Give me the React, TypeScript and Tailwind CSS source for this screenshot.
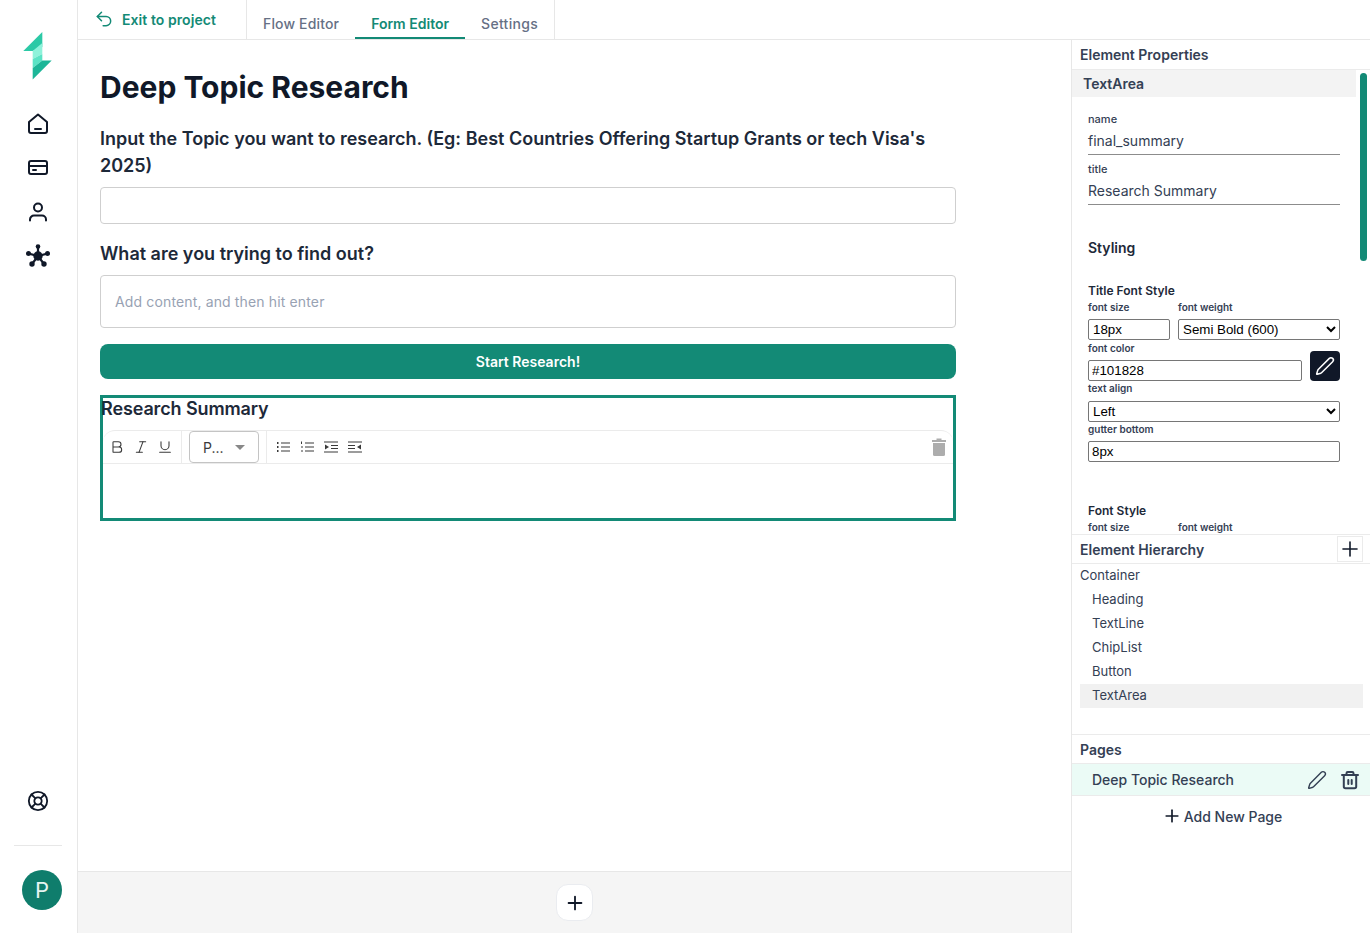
import React from "react";
import { Undo2, Plus, Pen, LifeBuoy, Bold, Italic, Underline } from "lucide-react";

const Logo = () => (
  <svg width="30" height="48" viewBox="0 0 30 48" className="block">
    <polygon points="19.3,0 0.3,19 9.7,19 19.3,15" fill="#2cc9a6" />
    <polygon points="9.7,19 19.3,11 19.3,19 19.3,22 9.7,27" fill="#8ef2da" />
    <polygon points="9.7,27 19.3,22 19.3,28.5 9.7,36" fill="#5be3c5" />
    <polygon points="9.7,36 19.3,28.5 28.7,28.5 9.7,47.5" fill="#1cb698" />
  </svg>
);

const HomeIcon = () => (
  <svg width="24" height="24" viewBox="0 0 24 24" fill="none" stroke="#101828" strokeWidth="2" strokeLinejoin="round" strokeLinecap="round">
    <path d="M3 10 12 2.500 21 10v9a2 2 0 0 1-2 2H5a2 2 0 0 1-2-2z" />
    <path d="M9 17h6" />
  </svg>
);
const CardIcon = () => (
  <svg width="24" height="24" viewBox="0 0 24 24" fill="none" stroke="#101828" strokeWidth="2" strokeLinejoin="round" strokeLinecap="round">
    <rect x="3" y="5" width="18" height="13" rx="2" />
    <path d="M3 10h18" />
    <path d="M7 14h3" />
  </svg>
);
const UserIcon = () => (
  <svg width="24" height="24" viewBox="0 0 24 24" fill="none" stroke="#101828" strokeWidth="2" strokeLinecap="round">
    <circle cx="12" cy="7.500" r="4" />
    <path d="M4 20.500v-1a4 4 0 0 1 4-4h8a4 4 0 0 1 4 4v1" />
  </svg>
);
const NetIcon = () => (
  <svg width="24" height="24" viewBox="0 0 24 24" fill="#101828" stroke="#101828" strokeWidth="2.200">
    <path d="M12 3v9M2.500 9.500 12 12l9.500-2.500M6 20l6-8 6 8" fill="none" />
    <circle cx="12" cy="12" r="4.700" stroke="none" />
    <circle cx="12" cy="2.500" r="2.300" stroke="none" />
    <circle cx="2.500" cy="9.500" r="2.500" stroke="none" />
    <circle cx="21.500" cy="9.500" r="2.500" stroke="none" />
    <circle cx="6" cy="20" r="2.700" stroke="none" />
    <circle cx="18" cy="20" r="2.700" stroke="none" />
  </svg>
);
const TrashFill = () => (
  <svg width="14" height="18" viewBox="0 0 14 18" fill="#adadad">
    <rect x="0" y="2" width="14" height="2" />
    <rect x="4.500" y="0.500" width="5" height="2" />
    <path d="M1 5h12v11.500a1.500 1.500 0 0 1-1.500 1.500h-9A1.500 1.500 0 0 1 1 16.500z" />
  </svg>
);
const TrashLine = () => (
  <svg width="20" height="20" viewBox="0 0 20 20" fill="none" stroke="#344054" strokeWidth="2" strokeLinecap="round" strokeLinejoin="round">
    <path d="M2 5h16" />
    <path d="M6.500 5V3.200C6.500 2.500 7 2 7.700 2h4.600c.7 0 1.200.5 1.200 1.200V5" />
    <path d="M3.800 5v11.500c0 1 .7 1.700 1.700 1.700h9c1 0 1.700-.7 1.700-1.700V5" />
    <path d="M8.300 10v4M11.700 10v4" />
  </svg>
);

const ToolIcon = ({ children }: { children: React.ReactNode }) => (
  <svg width="14" height="14" viewBox="0 0 14 14" fill="#3a3a3a" stroke="#3a3a3a" strokeWidth="1.200">
    {children}
  </svg>
);
const BulletList = () => (
  <ToolIcon>
    <path d="M5 3h9M5 7h9M5 11h9" fill="none" />
    <path d="M1 3h1.500M1 7h1.500M1 11h1.500" fill="none" strokeWidth="1.800" />
  </ToolIcon>
);
const NumberList = () => (
  <ToolIcon>
    <path d="M5 3h9M5 7h9M5 11h9" fill="none" />
    <path d="M1.500 1.500v2.500M1 7h2M1 11h2" fill="none" strokeWidth="1" />
  </ToolIcon>
);
const IndentMore = () => (
  <ToolIcon>
    <path d="M0 2h14M7 5.500h7M7 8.500h7M0 12h14" fill="none" />
    <polygon points="1,4.500 5,7 1,9.500" stroke="none" />
  </ToolIcon>
);
const IndentLess = () => (
  <ToolIcon>
    <path d="M0 2h14M0 5.500h7M0 8.500h7M0 12h14" fill="none" />
    <polygon points="13,4.500 9,7 13,9.500" stroke="none" />
  </ToolIcon>
);

const labelCls = "text-[10px] leading-[12px] font-semibold text-[#344054]";
const fieldCls = "h-[21px] border border-[#767676] rounded-[2px] bg-white text-[13.33px] text-black font-['Liberation_Sans',sans-serif] outline-none";

export default function App() {
  return (
    <div className="flex h-[933px] w-[1370px] overflow-hidden bg-white font-['Inter',sans-serif] text-[#101828]">
      {/* Sidebar */}
      <aside className="flex h-full w-[78px] shrink-0 flex-col items-center border-r border-[#e7e7e7] pt-8 pr-[1px] pb-[23px]">
        <div className="-ml-[1px]"><Logo /></div>
        <nav className="mt-[32px] flex flex-col items-center gap-5">
          <HomeIcon />
          <CardIcon />
          <UserIcon />
          <NetIcon />
        </nav>
        <div className="mt-auto flex flex-col items-center">
          <LifeBuoy size={22} color="#101828" strokeWidth={2} />
          <div className="mt-[33px] h-px w-[48px] bg-[#e7e7e7]" />
          <div className="mt-6 ml-[8px] flex h-10 w-10 items-center justify-center rounded-full bg-[#0f7d6c] text-[22px] text-[#e6f5f1]">P</div>
        </div>
      </aside>

      {/* Main column */}
      <div className="flex min-w-0 flex-1 flex-col">
        <header className="flex h-10 shrink-0 border-b border-[#e7e7e7]">
          <div className="flex w-[169px] items-start gap-2 border-r border-[#e7e7e7] pt-[11px] pl-4">
            <Undo2 className="-mt-[2px]" size={20} color="#138a76" strokeWidth={1.800} />
            <span className="text-[14px] leading-[18px] font-semibold tracking-[0.07px] text-[#138a76]">Exit to project</span>
          </div>
          <div className="flex border-r border-[#e7e7e7] pl-[8px]">
            <div className="pt-[15px] pr-[16px] pl-[8px] text-[14px] leading-[18px] font-medium tracking-[0.15px] text-[#667085]">Flow Editor</div>
            <div className="border-b-2 border-[#138a76] px-4 pt-[15px] text-[14px] leading-[18px] font-semibold text-[#138a76]">Form Editor</div>
            <div className="px-4 pt-[15px] text-[14px] leading-[18px] font-medium tracking-[0.3px] text-[#667085]">Settings</div>
          </div>
        </header>

        <div className="flex min-h-0 flex-1">
          <div className="flex min-w-0 flex-1 flex-col">
            <main className="min-h-0 flex-1 pt-[28px] pl-[22px]">
              <div className="w-[856px]">
                <h1 className="text-[30px] leading-[38px] font-bold text-[#101828]">Deep Topic Research</h1>
                <label className="mt-[19px] block text-[18px] leading-[27px] font-semibold text-[#1d2939]">
                  Input the Topic you want to research. (Eg: Best Countries Offering Startup Grants or tech Visa's 2025)
                </label>
                <input className="mt-[8px] block h-[37px] w-full rounded border border-[#cfcfcf] outline-none" />
                <label className="mt-[16px] block text-[18px] leading-[27px] font-semibold text-[#1d2939]">What are you trying to find out?</label>
                <div className="mt-[8px] flex h-[53px] items-center rounded border border-[#cfcfcf] px-[14px] text-[14px] tracking-[0.14px] text-[#98a2b3]">Add content, and then hit enter</div>
                <button className="mt-4 flex h-[35px] w-full items-center justify-center rounded-lg bg-[#138a76] text-[14px] font-semibold text-white">Start Research!</button>
                <section className="mt-4 h-[126px] border-[3px] border-[#138a76]">
                  <div className="-ml-[2px] text-[18px] leading-[22px] font-semibold tracking-[-0.12px] text-[#1d2939]">Research Summary</div>
                  <div className="mt-[10px] flex h-[34px] items-center rounded-t-xl border-y border-[#ebebeb] text-[#3a3a3a]">
                    <div className="flex h-full w-[79px] items-center gap-2 border-r border-[#ebebeb] pl-[6px]">
                      <Bold size={16} strokeWidth={1.600} />
                      <Italic size={16} strokeWidth={1.600} />
                      <Underline size={16} strokeWidth={1.600} />
                    </div>
                    <div className="ml-[7px] flex h-[32px] w-[70px] items-center rounded border border-[#c4c4c4] pl-[13px] text-[14px]">
                      P...
                      <span className="ml-[11px] h-0 w-0 border-x-[5px] border-t-[5px] border-x-transparent border-t-[#888888]" />
                    </div>
                    <div className="ml-[7px] flex h-full flex-1 items-center gap-[10px] border-l border-[#ebebeb] pl-[9px]">
                      <BulletList />
                      <NumberList />
                      <IndentMore />
                      <IndentLess />
                      <div className="mr-[7px] ml-auto"><TrashFill /></div>
                    </div>
                  </div>
                </section>
              </div>
            </main>
            <footer className="flex h-[62px] shrink-0 items-center justify-center border-t border-[#e7e7e7] bg-[#f5f5f5]">
              <div className="flex h-[37px] w-[37px] items-center justify-center rounded-xl border border-[#eaecf0] bg-white">
                <Plus size={22} color="#101828" strokeWidth={2} />
              </div>
            </footer>
          </div>

          {/* Right panel */}
          <aside className="flex h-full w-[299px] shrink-0 flex-col border-l border-[#e7e7e7]">
            <div className="flex h-[30px] shrink-0 items-center border-b border-[#ebebeb] pl-[8px] text-[14px] font-semibold text-[#344054]">Element Properties</div>
            <div className="relative h-[464px] shrink-0 overflow-hidden">
              <div className="absolute top-[3px] right-[3px] h-[188px] w-[7px] rounded-full bg-[#138a76]" />
              <div className="flex h-[27px] w-[284px] items-center bg-[#f3f3f3] pl-[11px] text-[14px] font-semibold text-[#344054]">TextArea</div>
              <div className="ml-[16px] w-[252px]">
                <div className="mt-[16px] text-[11px] leading-[13px] font-medium text-[#344054]">name</div>
                <div className="mt-[3px] h-[26px] border-b border-[#8c8c8c] text-[14px] leading-[24px] text-[#344054]">final_summary</div>
                <div className="mt-[8px] text-[11px] leading-[13px] font-medium text-[#344054]">title</div>
                <div className="mt-[3px] h-[26px] border-b border-[#8c8c8c] text-[14px] leading-[24px] text-[#344054]">Research Summary</div>
                <div className="mt-[33px] text-[14px] leading-[20px] font-semibold text-[#1d2939]">Styling</div>
                <div className="mt-[25px] text-[12px] leading-[16px] font-semibold text-[#1d2939]">Title Font Style</div>
                <div className="mt-[2px] flex gap-2">
                  <div className="w-[82px]">
                    <div className={labelCls}>font size</div>
                    <input defaultValue="18px" className={`mt-[6px] block w-[82px] px-1 ${fieldCls}`} />
                  </div>
                  <div className="flex-1">
                    <div className={labelCls}>font weight</div>
                    <select defaultValue="600" className={`mt-[6px] block w-full ${fieldCls}`}>
                      <option value="600">Semi Bold (600)</option>
                    </select>
                  </div>
                </div>
                <div className="mt-[2px] flex items-end gap-2">
                  <div className="flex-1">
                    <div className={labelCls}>font color</div>
                    <input defaultValue="#101828" className={`mt-[6px] block w-full px-[3px] ${fieldCls}`} />
                  </div>
                  <div className="flex h-[30px] w-[30px] items-center justify-center rounded bg-[#101828]">
                    <Pen size={20} color="#ffffff" strokeWidth={1.800} />
                  </div>
                </div>
                <div className={`mt-[1px] ${labelCls}`}>text align</div>
                <select defaultValue="left" className={`mt-[7px] block w-full ${fieldCls}`}>
                  <option value="left">Left</option>
                </select>
                <div className={`mt-[1px] ${labelCls}`}>gutter bottom</div>
                <input defaultValue="8px" className={`mt-[6px] block w-full px-[3px] ${fieldCls}`} />
                <div className="mt-[41px] text-[12px] leading-[16px] font-semibold text-[#1d2939]">Font Style</div>
                <div className="mt-[2px] flex gap-2">
                  <div className={`w-[82px] ${labelCls}`}>font size</div>
                  <div className={labelCls}>font weight</div>
                </div>
              </div>
            </div>

            <div className="flex h-[30px] shrink-0 items-center justify-between border-y border-[#ebebeb] pl-[8px] text-[14px] font-semibold text-[#344054]">
              Element Hierarchy
              <div className="mr-[7px] flex h-[26px] w-[26px] items-center justify-center border border-[#ebebeb]">
                <Plus size={24} color="#101828" strokeWidth={1.600} />
              </div>
            </div>
            <div className="h-[171px] shrink-0 border-b border-[#ebebeb] text-[13px] text-[#344054]">
              <div className="flex h-6 items-center pl-[8px]">Container</div>
              {["Heading", "TextLine", "ChipList", "Button"].map((t) => (
                <div key={t} className="flex h-6 items-center pl-[20px]">{t}</div>
              ))}
              <div className="mr-[7px] ml-[8px] flex h-6 items-center bg-[#f1f1f1] pl-[12px]">TextArea</div>
            </div>
            <div className="flex h-[29px] shrink-0 items-center border-b border-[#ebebeb] pl-[8px] text-[14px] font-semibold text-[#344054]">Pages</div>
            <div className="flex h-[32px] shrink-0 items-center border-b border-[#ebebeb] bg-[#ebfbf6] pr-[10px] pl-[20px] text-[14px] font-medium text-[#344054]">
              Deep Topic Research
              <Pen className="mr-[13px] ml-auto" size={20} color="#344054" strokeWidth={1.700} />
              <TrashLine />
            </div>
            <div className="flex h-[40px] shrink-0 items-center justify-center gap-[2px] pl-[2px] text-[14px] font-medium text-[#344054]">
              <Plus size={20} color="#101828" strokeWidth={2} />
              Add New Page
            </div>
          </aside>
        </div>
      </div>
    </div>
  );
}
